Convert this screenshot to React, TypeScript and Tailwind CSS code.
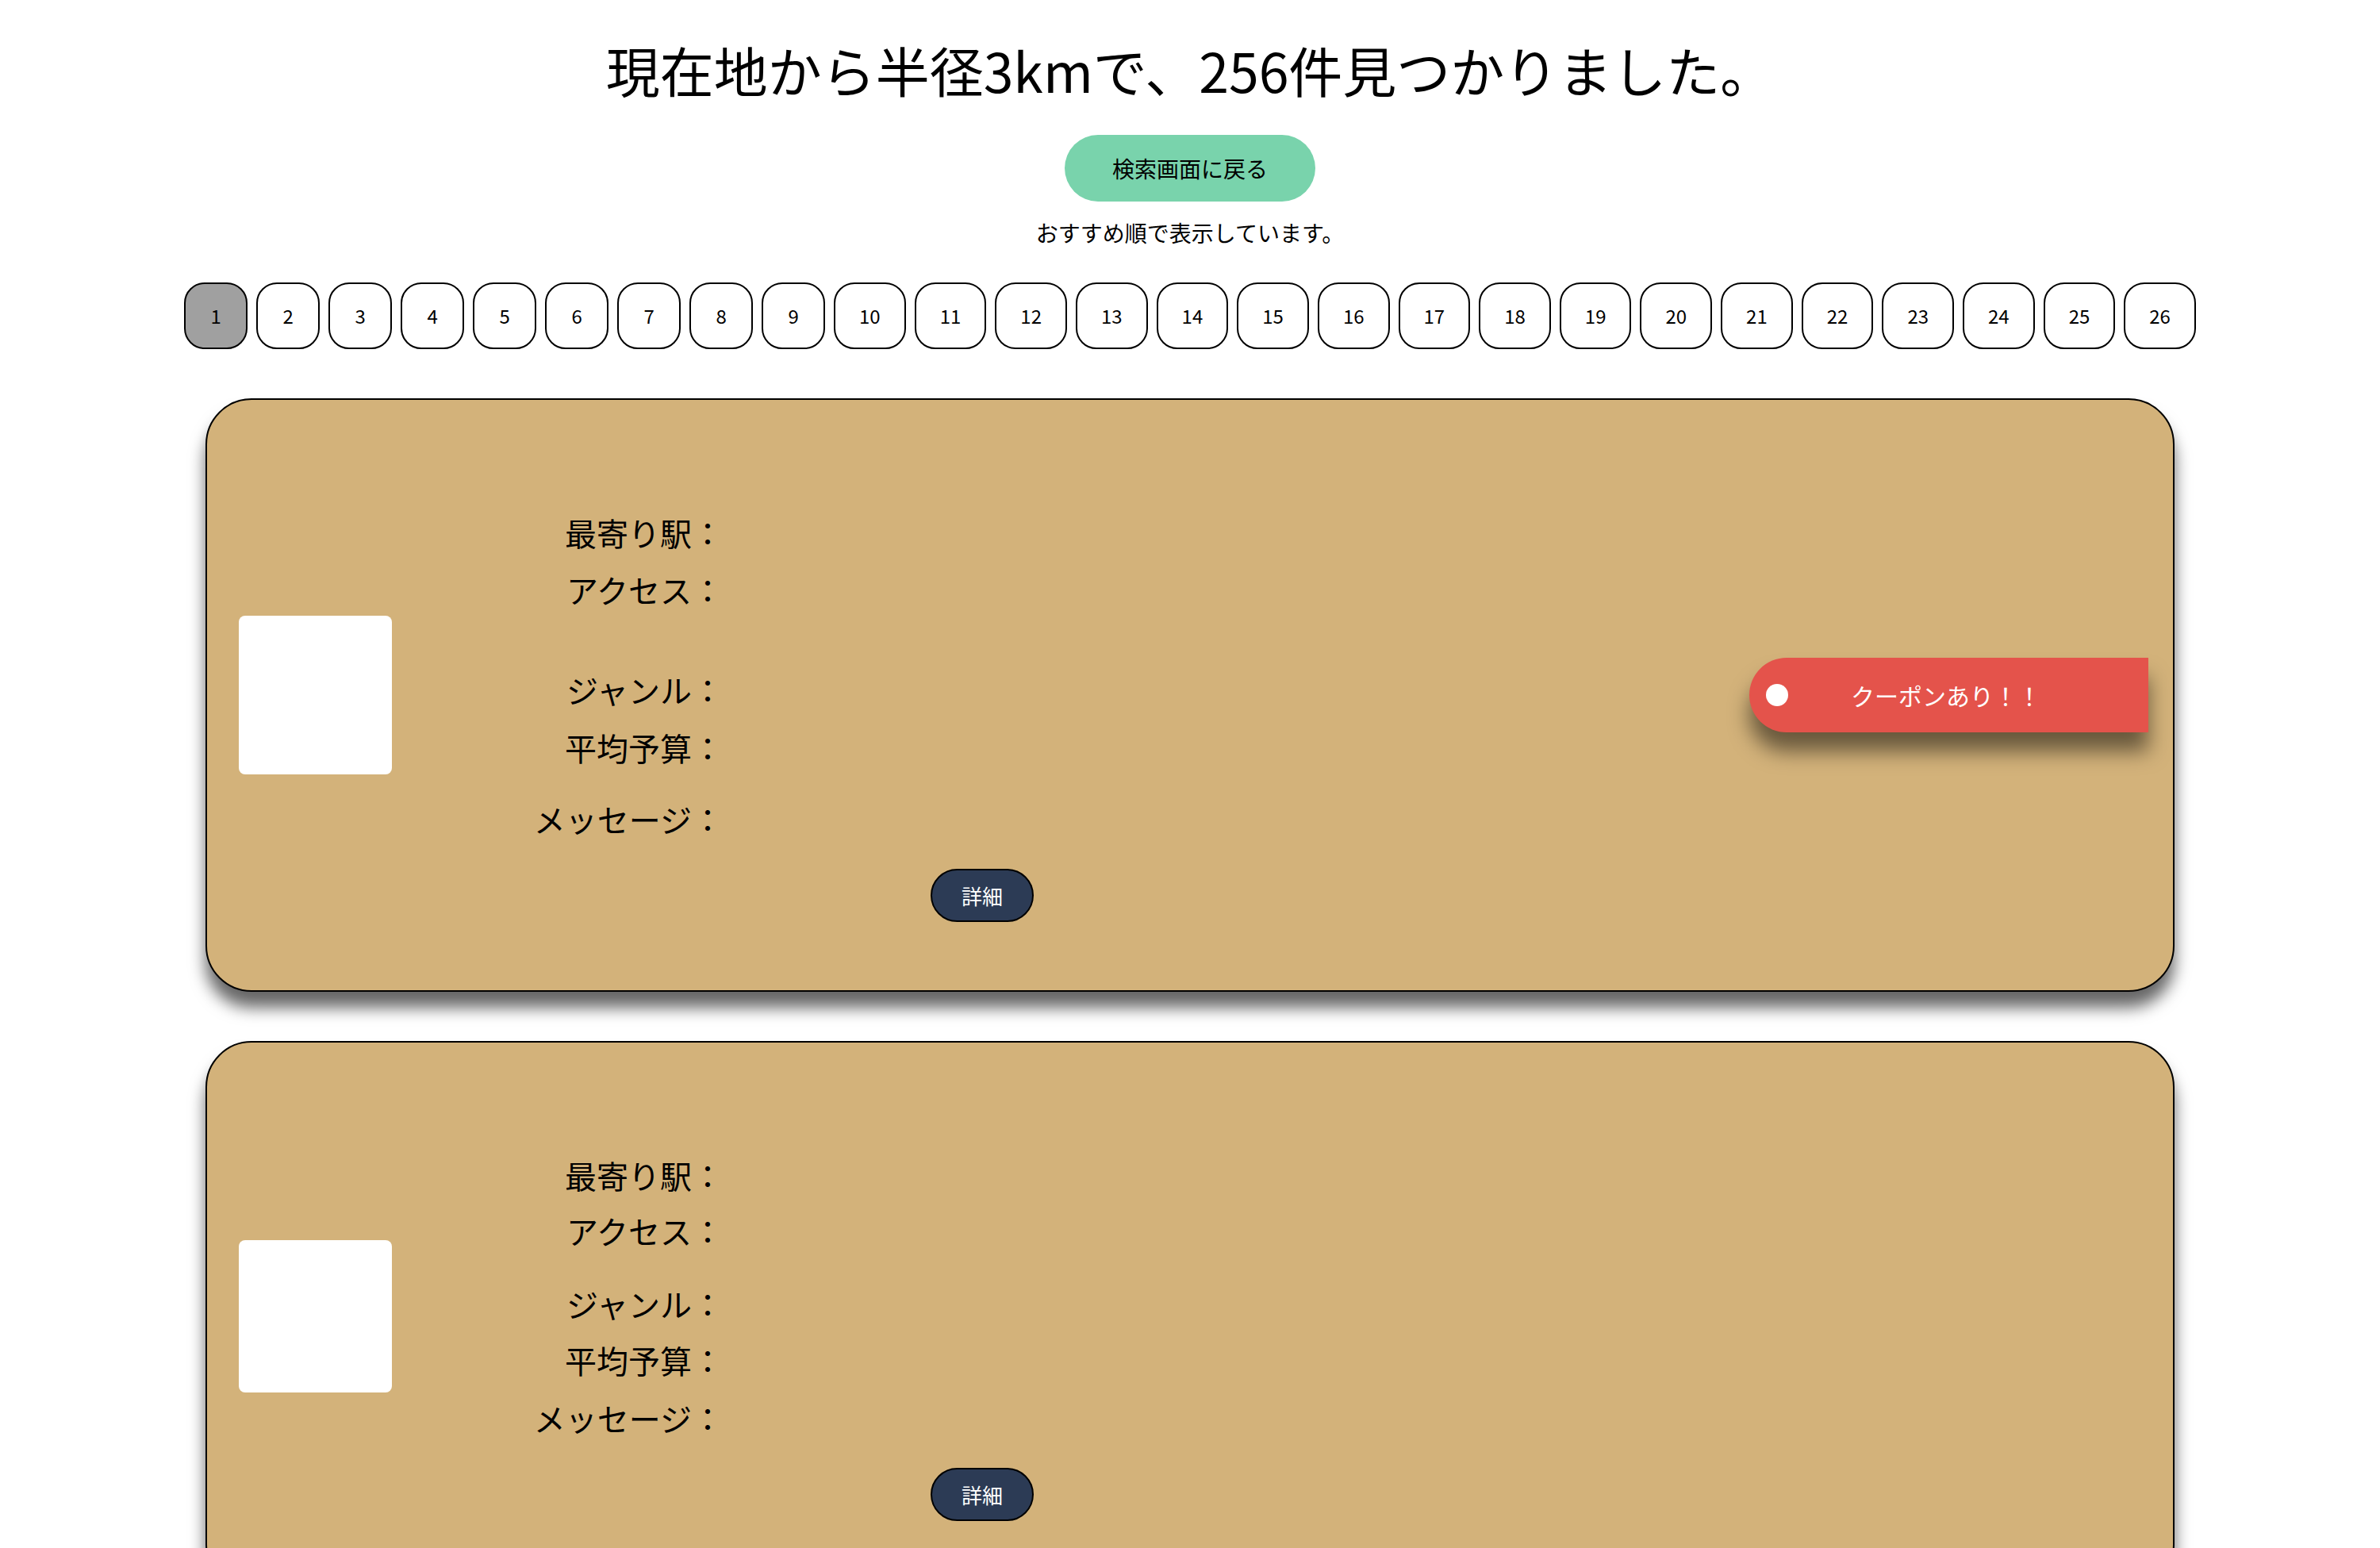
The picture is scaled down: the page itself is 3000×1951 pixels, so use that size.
import React from 'react';

type Shop = {
  id: number;
  coupon: boolean;
  // gap above each label row, in px (first row has none)
  gaps: number[];
  imgH: number;
};

const labels = ['最寄り駅：', 'アクセス：', 'ジャンル：', '平均予算：', 'メッセージ：'];

const shops: Shop[] = [
  { id: 1, coupon: true, gaps: [0, 15, 69, 16, 33], imgH: 200 },
  { id: 2, coupon: false, gaps: [0, 13, 35, 14, 16], imgH: 192 },
];

const pages = Array.from({ length: 26 }, (_, i) => i + 1);

const font = { fontFamily: '"Noto Sans CJK JP", "Noto Sans", sans-serif' };

const ShopCard: React.FC<{ shop: Shop }> = ({ shop }) => (
  <div className="w-[2482px] mx-auto flex items-center bg-[#d3b27a] border-2 border-black rounded-[58px] shadow-[0_20px_20px_rgba(0,0,0,0.6)]">
    <div className="ml-[40px] w-[193px] bg-white rounded-[8px] shrink-0" style={{ height: shop.imgH }} />

    <div className="flex flex-col pt-[139px] pb-[86px]">
      {labels.map((label, i) => (
        <div key={label} className="flex" style={{ marginTop: shop.gaps[i] }}>
          <span className="w-[418px] text-right text-[40px] leading-[57px] text-black">{label}</span>
          <span className="text-[40px] leading-[57px]"></span>
        </div>
      ))}
      <button className="mt-[34px] ml-[679px] w-[130px] h-[67px] bg-[#2c3b55] border-2 border-black rounded-full text-white text-[26px] leading-none">
        詳細
      </button>
    </div>

    {shop.coupon && (
      <div className="ml-auto mr-[31px] w-[503px] h-[94px] bg-[#e4534b] rounded-l-full flex items-center shadow-[0_24px_26px_rgba(0,0,0,0.5)]">
        <span className="ml-[21px] w-[28px] h-[28px] rounded-full bg-white shrink-0" />
        <span className="ml-[79px] text-white text-[30px] leading-none">クーポンあり！！</span>
      </div>
    )}
  </div>
);

export default function App() {
  return (
    <div className="w-full min-h-[1951px] bg-white text-black pb-[80px]" style={font}>
      <div className="flex flex-col items-center">
        <h1 className="mt-[34px] text-[68px] leading-[108px] font-normal">現在地から半径3kmで、256件見つかりました。</h1>
        <button className="mt-[28px] w-[316px] h-[84px] rounded-full bg-[#79d3ac] text-[28px] leading-none text-black">
          検索画面に戻る
        </button>
        <p className="mt-[18px] text-[28px] leading-[42px]">おすすめ順で表示しています。</p>

        <div className="mt-[42px] flex gap-[11px]">
          {pages.map(p => (
            <button
              key={p}
              className={
                p === 1
                  ? 'h-[84px] min-w-[80px] px-[30px] rounded-[26px] border-2 border-black bg-[#a0a0a0] text-[24px] leading-none'
                  : 'h-[84px] min-w-[80px] px-[30px] rounded-[26px] border-2 border-black bg-white text-[24px] leading-none'
              }
            >
              {p}
            </button>
          ))}
        </div>
      </div>

      <div className="mt-[62px] flex flex-col gap-[62px]">
        {shops.map(s => (
          <ShopCard key={s.id} shop={s} />
        ))}
      </div>
    </div>
  );
}
